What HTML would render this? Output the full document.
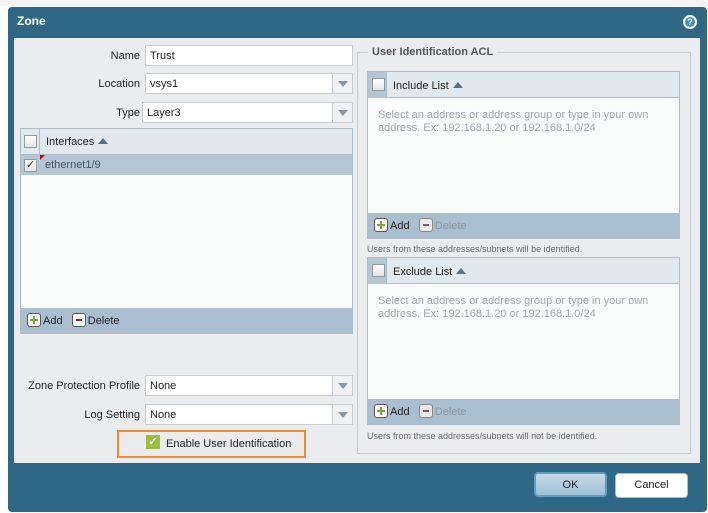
<!DOCTYPE html>
<html><head><style>
*{box-sizing:border-box;margin:0;padding:0}
body{width:708px;height:513px;background:#fff;font-family:"Liberation Sans",sans-serif;font-size:11px;color:#222;position:relative;overflow:hidden}
.a{position:absolute}
.dlg{left:8px;top:7px;width:699px;height:505px;background:#2f6885;border-radius:4px}
.title{left:17px;top:14px;color:#fff;font-weight:bold;font-size:12px}
.content{left:14px;top:38px;width:686px;height:425px;background:#ebecee}
.lbl{text-align:right;width:130px;left:10px}
.inp{background:#fff;border:1px solid #c8ccd0;height:21px;padding:4px 4px;font-size:11px}
.dd{position:absolute;right:0;top:0;width:20px;height:19px;border-left:1px solid #c8ccd0;background:#f0f1f2}
.dd:after{content:"";position:absolute;left:5px;top:7px;border-left:5px solid transparent;border-right:5px solid transparent;border-top:6px solid #8a98a4}
.grid{background:#fafcfc;border:1px solid #b0bcc6}
.gh{position:absolute;left:0;right:0;top:0;height:26px;background:#e2e9ee;border-bottom:1px solid #b0bcc6}
.cb{position:absolute;width:13px;height:13px;border:1px solid #8f9aa4;background:linear-gradient(#fff,#e4e4e4)}
.tri{display:inline-block;border-left:5px solid transparent;border-right:5px solid transparent;border-bottom:6px solid #5a7286;margin-left:4px;vertical-align:1px}
.gf{position:absolute;left:0;right:0;bottom:0;height:25px;background:#a9bfcf}
.ic{display:inline-block;width:14px;height:14px;border:1px solid #555;border-radius:3px;background:#fff;position:relative;vertical-align:-3px;margin-right:2px}
.ph{color:#a0a6ac;font-size:11px;line-height:13px}
.note{font-size:9px;color:#6a6a6a}
.btn{height:25px;width:73px;border-radius:4px;text-align:center;line-height:23px;font-size:11px}
</style></head><body>
<div class="a" style="left:0;top:0;width:708px;height:6px;background:#f3f3f3"></div>
<div class="a dlg"></div>
<div class="a title">Zone</div>
<div class="a" style="left:683px;top:15px;width:14px;height:14px;border-radius:50%;background:#3d8fc4;border:2px solid #fff;color:#fff;font-size:9px;font-weight:bold;text-align:center;line-height:10px">?</div>
<div class="a content"></div>

<div class="a lbl" style="top:50px">Name</div>
<div class="a inp" style="left:145px;top:45px;width:208px">Trust</div>
<div class="a lbl" style="top:78px">Location</div>
<div class="a inp" style="left:145px;top:73px;width:208px">vsys1<div class="dd"></div></div>
<div class="a lbl" style="top:107px">Type</div>
<div class="a inp" style="left:142px;top:102px;width:211px">Layer3<div class="dd"></div></div>

<div class="a grid" style="left:20px;top:128px;width:333px;height:206px">
 <div class="gh"><div class="a" style="left:0;top:0;width:19px;height:25px;border-right:1px solid #b0bcc6"></div><div class="cb" style="left:3px;top:6px"></div><div class="a" style="left:25px;top:7px">Interfaces<span class="tri"></span></div></div>
 <div class="a" style="left:0;top:26px;right:0;height:20px;background:#b4c6d4"><div class="cb" style="left:3px;top:4px;color:#234;font-size:11px;line-height:11px;text-align:center">✓</div><div class="a" style="left:19px;top:0;border-right:5px solid transparent;border-top:5px solid #c00"></div><div class="a" style="left:24px;top:4px;color:#4a5560">ethernet1/9</div></div>
 <div class="gf"><div class="a" style="left:6px;top:5px"><span class="ic"><b style="position:absolute;left:2px;top:5px;width:8px;height:2px;background:#7a3"></b><b style="position:absolute;left:5px;top:2px;width:2px;height:8px;background:#7a3"></b></span>Add &nbsp; <span class="ic"><b style="position:absolute;left:3px;top:5px;width:6px;height:2px;background:#822"></b></span>Delete</div></div>
</div>

<div class="a lbl" style="top:380px">Zone Protection Profile</div>
<div class="a inp" style="left:145px;top:375px;width:208px">None<div class="dd"></div></div>
<div class="a lbl" style="top:409px">Log Setting</div>
<div class="a inp" style="left:145px;top:404px;width:208px">None<div class="dd"></div></div>
<div class="a" style="left:117px;top:430px;width:189px;height:28px;border:2px solid #f08a2a"></div>
<div class="a" style="left:146px;top:435px;width:14px;height:14px;background:#9bbf3a;color:#fff;font-size:11px;line-height:14px;text-align:center;font-weight:bold">✓</div>
<div class="a" style="left:166px;top:438px">Enable User Identification</div>

<div class="a" style="left:357px;top:52px;width:334px;height:402px;border:1px solid #c8ccd0"></div>
<div class="a" style="left:368px;top:46px;background:#ebecee;padding:0 4px;font-weight:bold;color:#555">User Identification ACL</div>

<div class="a grid" style="left:367px;top:71px;width:313px;height:168px">
 <div class="gh"><div class="a" style="left:0;top:0;width:19px;height:26px;border-right:1px solid #b0bcc6;background:#b4c6d4"></div><div class="cb" style="left:4px;top:6px"></div><div class="a" style="left:25px;top:8px">Include List<span class="tri"></span></div></div>
 <div class="a ph" style="left:10px;top:37px">Select an address or address group or type in your own<br>address. Ex: 192.168.1.20 or 192.168.1.0/24</div>
 <div class="gf"><div class="a" style="left:6px;top:5px"><span class="ic"><b style="position:absolute;left:2px;top:5px;width:8px;height:2px;background:#7a3"></b><b style="position:absolute;left:5px;top:2px;width:2px;height:8px;background:#7a3"></b></span>Add &nbsp; <span class="ic" style="border-color:#888;background:#e8ecef"><b style="position:absolute;left:3px;top:5px;width:6px;height:2px;background:#955"></b></span><span style="color:#8a96a0">Delete</span></div></div>
</div>
<div class="a note" style="left:367px;top:244px">Users from these addresses/subnets will be identified.</div>

<div class="a grid" style="left:367px;top:257px;width:313px;height:168px">
 <div class="gh"><div class="a" style="left:0;top:0;width:19px;height:26px;border-right:1px solid #b0bcc6;background:#b4c6d4"></div><div class="cb" style="left:4px;top:6px"></div><div class="a" style="left:25px;top:8px">Exclude List<span class="tri"></span></div></div>
 <div class="a ph" style="left:10px;top:37px">Select an address or address group or type in your own<br>address. Ex: 192.168.1.20 or 192.168.1.0/24</div>
 <div class="gf"><div class="a" style="left:6px;top:5px"><span class="ic"><b style="position:absolute;left:2px;top:5px;width:8px;height:2px;background:#7a3"></b><b style="position:absolute;left:5px;top:2px;width:2px;height:8px;background:#7a3"></b></span>Add &nbsp; <span class="ic" style="border-color:#888;background:#e8ecef"><b style="position:absolute;left:3px;top:5px;width:6px;height:2px;background:#955"></b></span><span style="color:#8a96a0">Delete</span></div></div>
</div>
<div class="a note" style="left:367px;top:431px">Users from these addresses/subnets will not be identified.</div>

<div class="a btn" style="left:534px;top:472px;background:linear-gradient(#c4dae8,#9ebfd6);border:2px solid #5e9cc4">OK</div>
<div class="a btn" style="left:615px;top:473px;background:#fff;border:1px solid #bbb">Cancel</div>
</body></html>
